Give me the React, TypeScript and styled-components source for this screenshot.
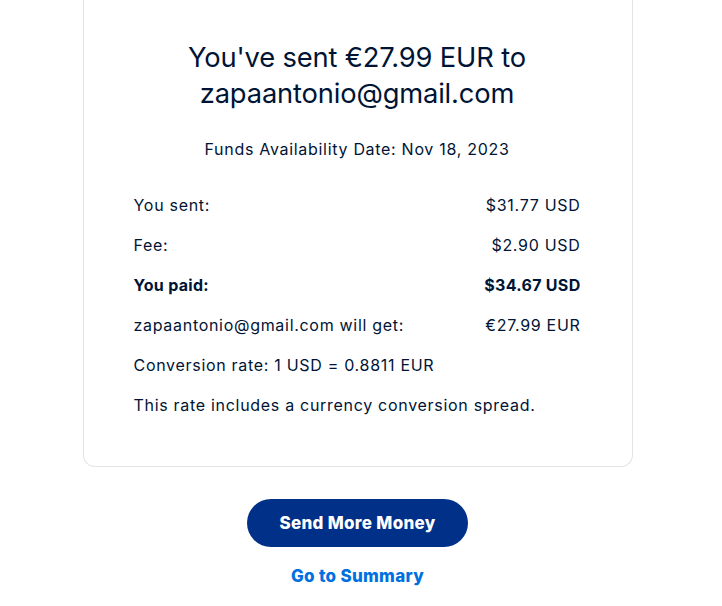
import React from "react";
import styled, { createGlobalStyle } from "styled-components";

const GlobalStyle = createGlobalStyle`
  html, body {
    margin: 0;
    padding: 0;
    background: #ffffff;
    font-family: Inter, "Noto Sans", "Liberation Sans", sans-serif;
    color: #001435;
  }
`;

interface Line {
  label: string;
  value?: string;
  strong?: boolean;
}

const lines: Line[] = [
  { label: "You sent:", value: "$31.77 USD" },
  { label: "Fee:", value: "$2.90 USD" },
  { label: "You paid:", value: "$34.67 USD", strong: true },
  { label: "zapaantonio@gmail.com will get:", value: "€27.99 EUR" },
  { label: "Conversion rate: 1 USD = 0.8811 EUR" },
  { label: "This rate includes a currency conversion spread." },
];

const App = () => {
  return (
    <>
      <GlobalStyle />
      <Page>
        <Card>
          <Title>
            You've sent €27.99 EUR to
            <br />
            zapaantonio@gmail.com
          </Title>
          <Availability>Funds Availability Date: Nov 18, 2023</Availability>
          <Details>
            {lines.map((line) => (
              <Row key={line.label} strong={line.strong}>
                <span>{line.label}</span>
                {line.value && <span>{line.value}</span>}
              </Row>
            ))}
          </Details>
        </Card>
        <Actions>
          <PrimaryButton type="button">Send More Money</PrimaryButton>
          <TextLink href="#">Go to Summary</TextLink>
        </Actions>
      </Page>
    </>
  );
};

export default App;

const Page = styled.div`
  width: 715px;
  display: flex;
  flex-direction: column;
  align-items: center;
`;

const Card = styled.section`
  box-sizing: border-box;
  width: 550px;
  padding: 40px 51px 41px 50px;
  border: 1px solid #e3e3e3;
  border-top: none;
  border-radius: 0 0 12px 12px;
  display: flex;
  flex-direction: column;
`;

const Title = styled.h1`
  margin: 0;
  font-size: 27.3px;
  line-height: 36px;
  font-weight: 400;
  text-align: center;
  letter-spacing: -0.15px;
`;

const Availability = styled.p`
  margin: 25px 0 0;
  font-size: 16px;
  line-height: 24px;
  text-align: center;
  letter-spacing: 0.7px;
`;

const Details = styled.div`
  margin-top: 24px;
  display: flex;
  flex-direction: column;
`;

const Row = styled.div<{ strong?: boolean }>`
  height: 40px;
  display: flex;
  align-items: center;
  justify-content: space-between;
  font-size: 16px;
  letter-spacing: ${(p) => (p.strong ? "0.3px" : "0.7px")};
  font-weight: ${(p) => (p.strong ? 700 : 400)};
`;

const Actions = styled.div`
  margin-top: 32px;
  display: flex;
  flex-direction: column;
  align-items: center;
`;

const PrimaryButton = styled.button`
  height: 48px;
  padding: 0 32px;
  border: none;
  border-radius: 24px;
  background: #003087;
  color: #ffffff;
  font-family: inherit;
  font-size: 17px;
  font-weight: 800;
  letter-spacing: 0.3px;
  cursor: pointer;
`;

const TextLink = styled.a`
  margin-top: 17px;
  font-size: 17px;
  line-height: 24px;
  font-weight: 800;
  letter-spacing: 0.3px;
  color: #0070e0;
  text-decoration: none;
`;
